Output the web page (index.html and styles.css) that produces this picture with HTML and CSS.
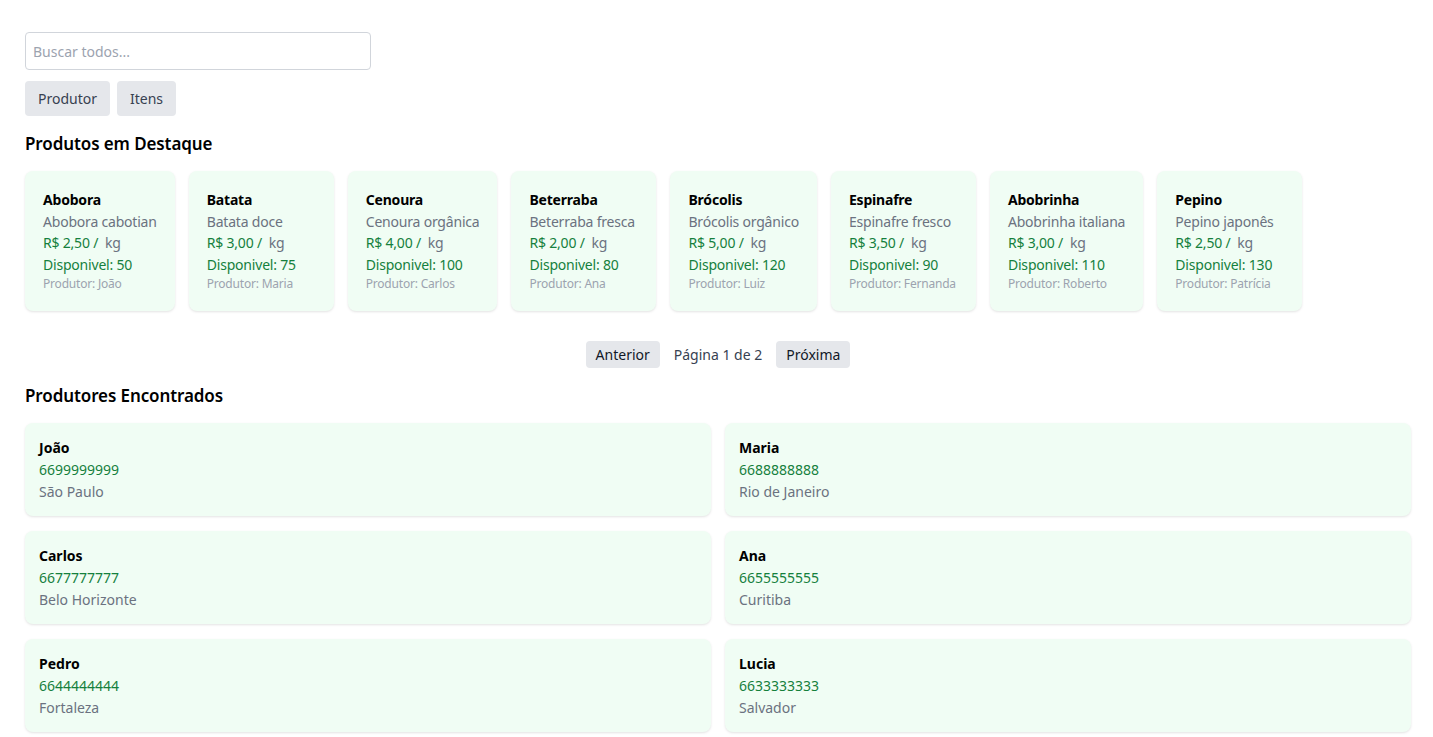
FILE: index.html
```html
<!DOCTYPE html>
<html lang="pt-BR">
<head>
<meta charset="utf-8">
<title>Busca</title>
<link rel="stylesheet" href="styles.css">
</head>
<body>
<main class="page">
  <input class="search" type="text" placeholder="Buscar todos...">
  <div class="tabs">
    <button class="btn">Produtor</button>
    <button class="btn">Itens</button>
  </div>

  <h2 class="section-title">Produtos em Destaque</h2>
  <div class="products">
    <div class="product"><div class="p-name">Abobora</div><div class="p-desc">Abobora cabotian</div><div class="p-price">R$ 2,50 /&nbsp; <span class="unit">kg</span></div><div class="p-stock">Disponivel: 50</div><div class="p-prod">Produtor: João</div></div>
    <div class="product"><div class="p-name">Batata</div><div class="p-desc">Batata doce</div><div class="p-price">R$ 3,00 /&nbsp; <span class="unit">kg</span></div><div class="p-stock">Disponivel: 75</div><div class="p-prod">Produtor: Maria</div></div>
    <div class="product"><div class="p-name">Cenoura</div><div class="p-desc">Cenoura orgânica</div><div class="p-price">R$ 4,00 /&nbsp; <span class="unit">kg</span></div><div class="p-stock">Disponivel: 100</div><div class="p-prod">Produtor: Carlos</div></div>
    <div class="product"><div class="p-name">Beterraba</div><div class="p-desc">Beterraba fresca</div><div class="p-price">R$ 2,00 /&nbsp; <span class="unit">kg</span></div><div class="p-stock">Disponivel: 80</div><div class="p-prod">Produtor: Ana</div></div>
    <div class="product"><div class="p-name">Brócolis</div><div class="p-desc">Brócolis orgânico</div><div class="p-price">R$ 5,00 /&nbsp; <span class="unit">kg</span></div><div class="p-stock">Disponivel: 120</div><div class="p-prod">Produtor: Luiz</div></div>
    <div class="product"><div class="p-name">Espinafre</div><div class="p-desc">Espinafre fresco</div><div class="p-price">R$ 3,50 /&nbsp; <span class="unit">kg</span></div><div class="p-stock">Disponivel: 90</div><div class="p-prod">Produtor: Fernanda</div></div>
    <div class="product"><div class="p-name">Abobrinha</div><div class="p-desc">Abobrinha italiana</div><div class="p-price">R$ 3,00 /&nbsp; <span class="unit">kg</span></div><div class="p-stock">Disponivel: 110</div><div class="p-prod">Produtor: Roberto</div></div>
    <div class="product"><div class="p-name">Pepino</div><div class="p-desc">Pepino japonês</div><div class="p-price">R$ 2,50 /&nbsp; <span class="unit">kg</span></div><div class="p-stock">Disponivel: 130</div><div class="p-prod">Produtor: Patrícia</div></div>
  </div>

  <div class="pager">
    <button class="btn btn-sm">Anterior</button>
    <span class="pager-info">Página 1 de 2</span>
    <button class="btn btn-sm">Próxima</button>
  </div>

  <h2 class="section-title">Produtores Encontrados</h2>
  <div class="producers">
    <div class="producer"><div class="r-name">João</div><div class="r-phone">6699999999</div><div class="r-city">São Paulo</div></div>
    <div class="producer"><div class="r-name">Maria</div><div class="r-phone">6688888888</div><div class="r-city">Rio de Janeiro</div></div>
    <div class="producer"><div class="r-name">Carlos</div><div class="r-phone">6677777777</div><div class="r-city">Belo Horizonte</div></div>
    <div class="producer"><div class="r-name">Ana</div><div class="r-phone">6655555555</div><div class="r-city">Curitiba</div></div>
    <div class="producer"><div class="r-name">Pedro</div><div class="r-phone">6644444444</div><div class="r-city">Fortaleza</div></div>
    <div class="producer"><div class="r-name">Lucia</div><div class="r-phone">6633333333</div><div class="r-city">Salvador</div></div>
  </div>
</main>
</body>
</html>
```

FILE: styles.css
```css
* { box-sizing: border-box; }

html, body {
  margin: 0;
  background: #ffffff;
}

body {
  font-family: "Segoe UI", "Noto Sans", "Open Sans", sans-serif;
  font-size: 14px;
  color: #111827;
}

.page {
  padding: 32px 22px 8px 25px;
}

.search {
  display: block;
  width: 346px;
  height: 38px;
  padding: 0 7px;
  border: 1px solid #d1d5db;
  border-radius: 4px;
  font: inherit;
  font-size: 14px;
  color: #374151;
  outline: none;
}
.search::placeholder { color: #9ca3af; }

.tabs {
  display: flex;
  gap: 7px;
  margin-top: 11px;
}

.btn {
  height: 35px;
  padding: 0 13px;
  border: none;
  border-radius: 4px;
  background: #e5e7eb;
  font: inherit;
  font-size: 14px;
  color: #374151;
}

.btn-sm {
  height: 27px;
  padding: 0 10px;
  color: #111827;
}

.section-title {
  margin: 14px 0 13px;
  font-size: 17px;
  line-height: 28px;
  font-weight: 600;
  letter-spacing: -0.1px;
  color: #000;
}

.products {
  display: flex;
  gap: 14px;
}

.product {
  min-width: 145px;
  padding: 18px 18px 19px;
  background: #f0fdf4;
  border-radius: 8px;
  box-shadow: 0 1px 3px rgba(0, 0, 0, 0.08), 0 1px 2px rgba(0, 0, 0, 0.04);
  white-space: nowrap;
  letter-spacing: -0.2px;
}

.p-name {
  font-weight: 700;
  line-height: 22px;
  color: #000;
}
.p-desc {
  line-height: 21px;
  color: #6b7280;
}
.p-price {
  line-height: 22px;
  color: #15803d;
}
.unit { color: #6b7280; }
.p-stock {
  line-height: 22px;
  color: #15803d;
}
.p-prod {
  font-size: 12px;
  line-height: 16px;
  color: #9ca3af;
}

.pager {
  display: flex;
  justify-content: center;
  align-items: center;
  gap: 14px;
  margin-top: 30px;
}
.pager-info { color: #374151; }

.producers {
  display: grid;
  grid-template-columns: 1fr 1fr;
  column-gap: 14px;
  row-gap: 15px;
}

.producer {
  padding: 14px;
  background: #f0fdf4;
  border-radius: 8px;
  box-shadow: 0 1px 3px rgba(0, 0, 0, 0.08), 0 1px 2px rgba(0, 0, 0, 0.04);
}
.r-name {
  font-weight: 700;
  line-height: 22px;
  color: #000;
}
.r-phone {
  line-height: 21.5px;
  color: #15803d;
}
.r-city {
  line-height: 21.5px;
  color: #6b7280;
}
```
